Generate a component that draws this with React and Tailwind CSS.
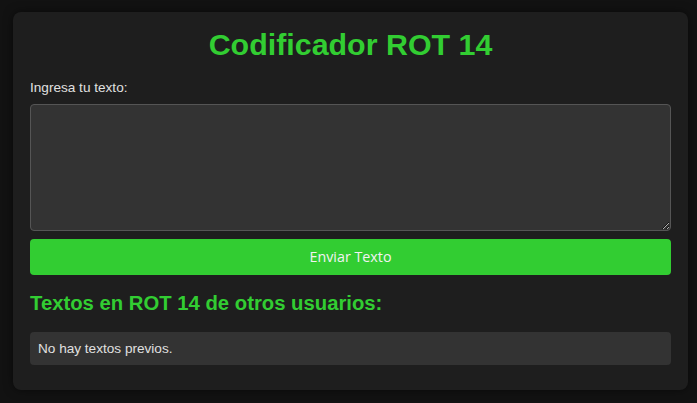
export default function App() {
  return (
    <div className="min-h-screen bg-[#121212] pt-[12px] pl-[13px] pb-[13px] font-['Liberation_Sans',Arial,sans-serif] text-[#e0e0e0]">
      <div className="w-[675px] rounded-[8px] bg-[#1e1e1e] px-[17px] pt-[14px] pb-[25px] shadow-[0_0_10px_rgba(0,0,0,0.5)]">
        <h1 className="text-center text-[30.4px] font-bold leading-[37px] text-[#32cd32]">
          Codificador ROT 14
        </h1>
        <label className="mt-[17px] block text-[13.6px] leading-[16px] text-[#e0e0e0]">
          Ingresa tu texto:
        </label>
        <textarea className="mt-[8px] block h-[127px] w-full resize-y rounded-[4px] border border-[#555] bg-[#333] p-[8px] text-[14px] text-white outline-none" />
        <button className="mt-[8px] block h-[36px] w-full rounded-[4px] bg-[#32cd32] font-['Open_Sans',sans-serif] text-[14.3px] text-[#f2f2f2]">
          Enviar Texto
        </button>
        <h2 className="mt-[16px] text-[20.3px] font-bold leading-[24px] text-[#32cd32]">
          Textos en ROT 14 de otros usuarios:
        </h2>
        <div className="mt-[17px] rounded-[4px] bg-[#333] px-[8px] py-[8px] text-[13.6px] leading-[17px] text-[#e0e0e0]">
          No hay textos previos.
        </div>
      </div>
    </div>
  );
}
